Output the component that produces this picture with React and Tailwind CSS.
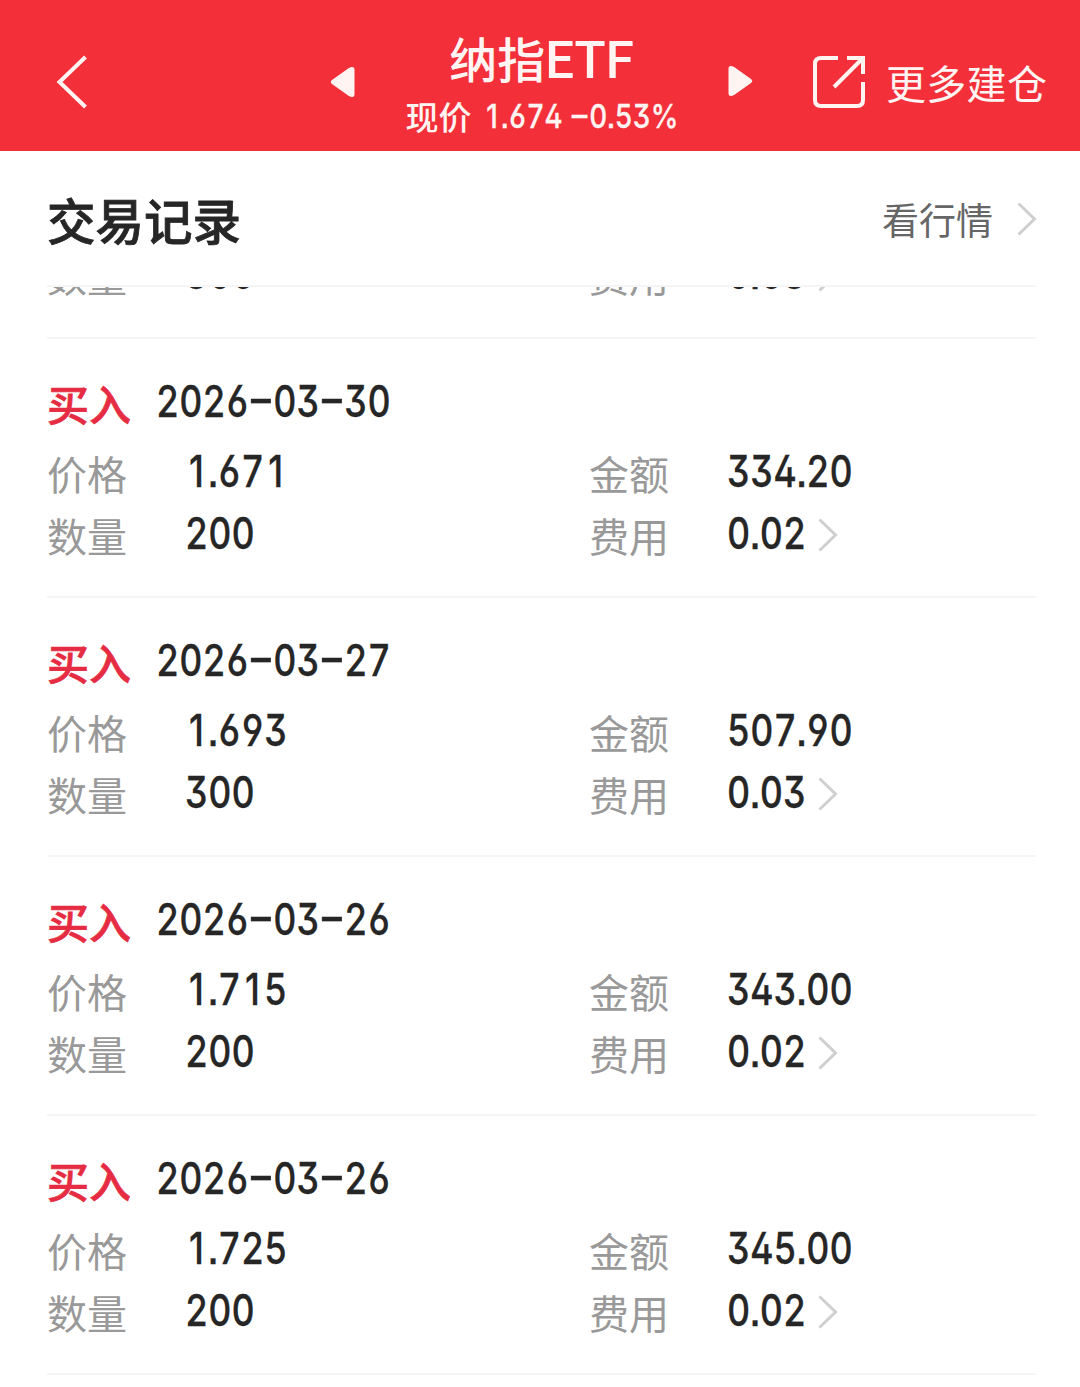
const records = [
  { date: '2026-03-30', price: '1.671', amount: '334.20', count: '200', fee: '0.02' },
  { date: '2026-03-27', price: '1.693', amount: '507.90', count: '300', fee: '0.03' },
  { date: '2026-03-26', price: '1.715', amount: '343.00', count: '200', fee: '0.02' },
  { date: '2026-03-26', price: '1.725', amount: '345.00', count: '200', fee: '0.02' },
];

// Splits out "1" (drawn without a foot) and "-" (drawn wide) from the other digits.
function glyphs(text) {
  return text.split(/([1-])/).map((part, i) => {
    if (part === '1')
      return (
        <span
          key={i}
          className="inline-block w-[0.645em] text-center [font-feature-settings:'ss07']"
        >
          1
        </span>
      );
    if (part === '-')
      return (
        <span key={i} className="inline-block w-[0.68em] scale-x-[1.7] text-center">
          -
        </span>
      );
    return part;
  });
}

function Num({ children }) {
  return (
    <span className="inline-block origin-left scale-x-[0.815] whitespace-nowrap font-['Inter',sans-serif] text-[44px] leading-[60px] font-medium text-[#262626] [font-feature-settings:'tnum','case','ss07','cv02','cv03','cv04','cv09'] [-webkit-text-stroke:0.3px_#262626]">
      {glyphs(children)}
    </span>
  );
}

function Chevron({ className }) {
  return (
    <svg viewBox="0 0 20 34" className={className} fill="none" stroke="currentColor" strokeWidth="3">
      <path d="M1.5 1.5 17.5 17 1.5 32.5" />
    </svg>
  );
}

function Field({ label, value, link }) {
  return (
    <div className="flex h-[62px] items-center">
      <span className="w-[138px] shrink-0 pt-[4px] text-[40px] leading-[56px] text-[#999999]">{label}</span>
      <div className="w-[82px] shrink-0">
        <Num>{value}</Num>
      </div>
      {link && <Chevron className="mt-[3px] ml-[9px] h-[34px] w-[20px] text-[#cfcfcf]" />}
    </div>
  );
}

function Record({ date, price, amount, count, fee }) {
  return (
    <article className="h-[259px] shrink-0 border-b-2 border-[#f5f5f5] pt-[31px]">
      <div className="flex h-[62px] items-center">
        <span className="w-[109px] shrink-0 pt-[4px] text-[42px] leading-[56px] font-medium text-[#e62c42] [-webkit-text-stroke:0.7px_#e62c42]">
          买入
        </span>
        <Num>{date}</Num>
      </div>
      <div className="mt-[8px] grid grid-cols-[542px_1fr]">
        <Field label="价格" value={price} />
        <Field label="金额" value={amount} />
        <Field label="数量" value={count} />
        <Field label="费用" value={fee} link />
      </div>
    </article>
  );
}

function Triangle({ className }) {
  return (
    <svg viewBox="0 0 26 32" className={className} fill="currentColor">
      <path d="M2 14 18.500 2.200Q24.500-1 24.500 4V28Q24.500 33 18.500 29.800L2 18Q-.5 16 2 14Z" />
    </svg>
  );
}

export default function App() {
  return (
    <div className="flex h-[1387px] w-[1080px] flex-col overflow-hidden bg-white font-['Noto_Sans_CJK_SC',sans-serif]">
      <header className="flex h-[151px] shrink-0 items-center bg-[#f3303a] pt-[12px] text-[#fff4f2]">
        <svg viewBox="0 0 32 54" className="ml-[56px] h-[54px] w-[32px]" fill="none" stroke="currentColor" strokeWidth="4">
          <path d="M29.5 2 3.5 27 29.5 52" />
        </svg>
        <Triangle className="ml-[242px] h-[32px] w-[26px]" />
        <div className="flex w-[371px] flex-col items-center">
          <h1 className="pt-[2px] text-[48px] leading-[64px] font-medium whitespace-nowrap">
            纳指<span className="font-['Roboto',sans-serif] text-[51px]">ETF</span>
          </h1>
          <p className="-mt-px mr-[4px] flex gap-[11px] text-[33px] leading-[48px] font-medium whitespace-nowrap">
            <span>现价</span>
            <span className="-mr-[49px] inline-block w-[240px] origin-left scale-x-[0.845] font-['Inter',sans-serif] text-[33px] [font-feature-settings:'tnum','case','ss07','cv02','cv03','cv04','cv09'] [-webkit-text-stroke:0.3px_#fff4f2]">
              {glyphs('1.674 -0.53%')}
            </span>
          </p>
        </div>
        <Triangle className="h-[32px] w-[26px] -translate-y-px rotate-180" />
        <svg viewBox="0 0 54 54" className="ml-[59px] h-[54px] w-[54px]" fill="none" stroke="currentColor" strokeWidth="4">
          <path d="M26 3H9Q3 3 3 9V45Q3 51 9 51H45Q51 51 51 45V27" />
          <path d="M35 3H51V19M51 3 22 32" />
        </svg>
        <span className="ml-[20px] text-[40px] leading-[56px] tracking-[0.3px] whitespace-nowrap">更多建仓</span>
      </header>

      <main className="flex min-h-0 flex-1 flex-col pr-[44px] pl-[47px]">
        <div className="flex h-[136px] shrink-0 items-center justify-between border-b-2 border-[#f5f5f5]">
          <h2 className="pt-[2px] text-[48.5px] leading-[64px] font-medium text-[#262626] [-webkit-text-stroke:0.8px_#262626]">
            交易记录
          </h2>
          <div className="flex items-center pt-[2px] text-[37px] leading-[52px] text-[#666666]">
            看行情
            <Chevron className="-mr-px ml-[24px] h-[34px] w-[20px] text-[#cfcfcf]" />
          </div>
        </div>
        <section className="flex min-h-0 flex-1 flex-col overflow-hidden">
          <div className="-mt-[45px] grid h-[97px] shrink-0 grid-cols-[542px_1fr] content-start border-b-2 border-[#f5f5f5]">
            <Field label="数量" value="300" />
            <Field label="费用" value="0.03" link />
          </div>
          {records.map((record, i) => (
            <Record key={i} {...record} />
          ))}
        </section>
      </main>
    </div>
  );
}
